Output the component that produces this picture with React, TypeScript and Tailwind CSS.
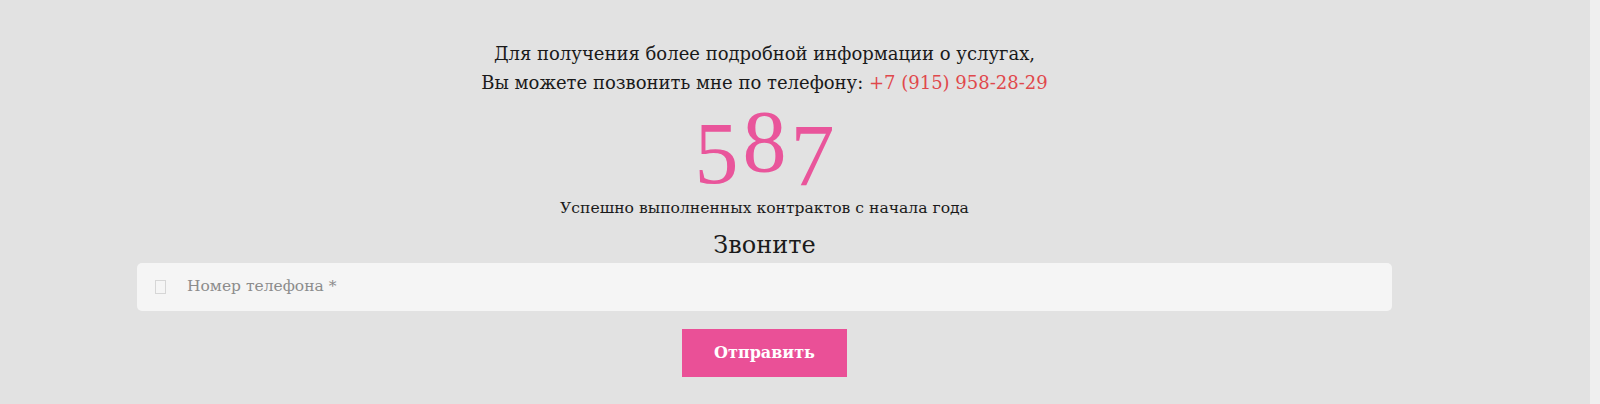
export default function App() {
  return (
    <div className="flex h-[404px] w-full overflow-hidden bg-[#e2e2e2] font-['DejaVu_Serif','Liberation_Serif',serif] text-[#1a1a1a]">
      <main className="flex-1 pl-[137px] pr-[198px] pt-[39px]">
        <div className="flex flex-col items-center">
          <p className="text-center text-[18px] leading-[29px]">
            Для получения более подробной информации о услугах,
            <br />
            Вы можете позвонить мне по телефону:{" "}
            <span className="text-[#e0484c]">+7 (915) 958-28-29</span>
          </p>
          <div className="mt-[1px] pl-[4px] font-['Liberation_Serif',serif] text-[88px] leading-none tracking-[4px] text-[#e9559b]">
            <span className="inline-block translate-y-[12px]">5</span>
            <span className="inline-block">8</span>
            <span className="inline-block translate-y-[14px]">7</span>
          </div>
          <p className="mt-[12px] text-[15.6px] leading-[20px]">
            Успешно выполненных контрактов с начала года
          </p>
          <h2 className="mt-[12px] text-[24px] leading-[30px]">Звоните</h2>
        </div>
        <div className="mt-[3px] flex h-[48px] w-full items-center rounded-[5px] bg-[#f5f5f5] pl-[18px]">
          <span className="h-[14px] w-[11px] border border-[#d6d6d6]" />
          <span className="ml-[21px] text-[15.5px] text-[#8c8c8c]">Номер телефона *</span>
        </div>
        <div className="mt-[18px] flex justify-center">
          <button className="h-[48px] w-[165px] bg-[#ea5097] text-[16px] font-bold text-white">
            Отправить
          </button>
        </div>
      </main>
      <div className="w-[10px] bg-[#efefef]" />
    </div>
  );
}
